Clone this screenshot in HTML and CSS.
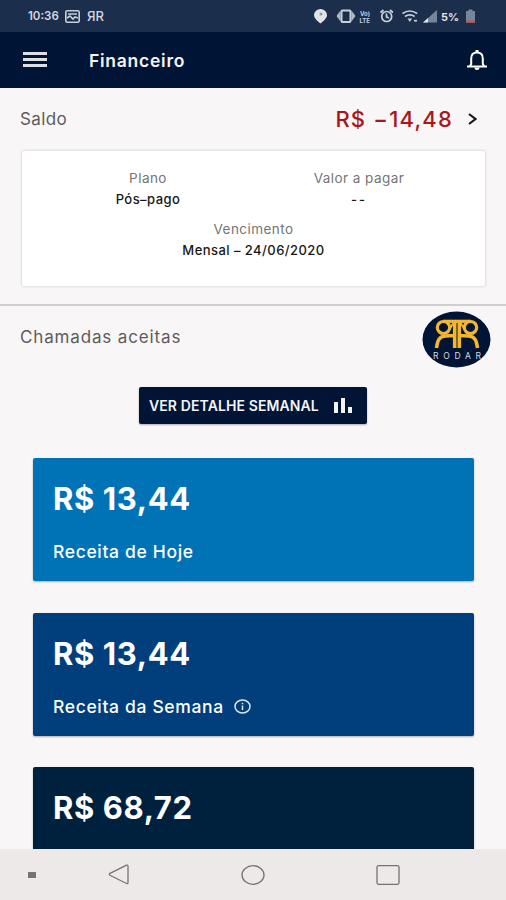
FILE: index.html
```html
<!DOCTYPE html>
<html lang="pt-BR">
<head>
  <meta charset="UTF-8" />
  <meta name="viewport" content="width=device-width, initial-scale=1.0"/>
  <title>Financeiro</title>
  <link rel="stylesheet" href="styles.css">
</head>
<body>
  <div class="status-bar">
    <span class="clock">10:36</span>
    <svg class="st-image" width="15" height="13" viewBox="0 0 15 13" fill="none" stroke="#c9d0dc" stroke-width="1.6">
      <rect x="0.8" y="0.8" width="13.4" height="11.4" rx="1.5"/>
      <path d="M3 4h9M2 8l3-2 3 3 2-2 3 1"/>
    </svg>
    <span class="st-brand"><span class="flip">R</span><span>R</span></span>
    <svg class="st-icons" width="164" height="18" viewBox="312 7 164 18" fill="none">
      <path d="M320.500 9a6.500 6.500 0 0 0-6.500 6.300c0 3.600 6.500 8.200 6.500 8.200s6.500-4.600 6.500-8.200A6.500 6.500 0 0 0 320.500 9z" fill="#e2e3e8"/>
      <circle cx="321" cy="14" r="1.500" fill="#8d99aa"/>
      <path d="M340.500 10.500v11l-4-5.500zM351.500 10.500v11l4-5.500z" fill="#aeb8c6"/>
      <rect x="341.500" y="10.500" width="9" height="11.500" rx="1" stroke="#c9d0dc" stroke-width="2"/>
      <text class="st-volte" x="360" y="15.500">Vo)</text>
      <text class="st-volte" x="359.500" y="22.500">LTE</text>
      <g stroke="#c9d0dc" stroke-width="1.700">
        <circle cx="386.700" cy="16.500" r="5"/>
        <path d="M386.500 13.500v3.500l2.500 1M380.500 12.500l3-2.500M393 12.500l-3-2.500"/>
      </g>
      <g stroke="#c9d0dc" stroke-width="1.700">
        <path d="M402.500 13.500q7.300-5 14.600 0M405 16.500q4.800-3.300 9.600 0"/>
        <path d="M407.500 18.500h4.600l-2.300 3.500z" fill="#c9d0dc" stroke="none"/>
        <path d="M414 20.700h3"/>
      </g>
      <path d="M423 22.500l14-12.500v12.500z" fill="#77859a"/>
      <path d="M423 22.500l5-4.500v4.500z" fill="#e2e3e8"/>
      <text class="st-battery" x="441" y="20.500" textLength="18" lengthAdjust="spacingAndGlyphs">5%</text>
      <path d="M466 11h2.500V9.500h4V11h2.500v11.500h-9z" fill="#77859a"/>
      <path d="M466 20.500h9v2.300h-9z" fill="#b65b54"/>
    </svg>
  </div>

  <header class="app-bar">
    <svg class="menu" width="24" height="16" viewBox="0 0 24 16" fill="#dedfe2">
      <path d="M0 0h24v3H0zM0 6h24v3H0zM0 12h24v3H0z"/>
    </svg>
    <h1>Financeiro</h1>
    <svg class="bell" width="22" height="22" viewBox="0 0 22 22" fill="none" stroke="#fff" stroke-width="2">
      <path d="M1 17.500h20M4 17l1.200-2V9.500C5.200 5.500 7.500 3.500 11 3.500s5.800 2 5.800 6V15l1.200 2"/>
      <path d="M9.500 1h3v3h-3zM8.500 18.500a2.500 2.500 0 0 0 5 0z" fill="#fff" stroke="none"/>
    </svg>
  </header>

  <main>
    <section class="balance">
      <div class="balance-head">
        <h2>Saldo</h2>
        <span class="amount">R$ −14,48</span>
        <svg class="chevron" width="9" height="12" viewBox="0 0 9 12" fill="none" stroke="#161616" stroke-width="2.2">
          <path d="M1 1l6.500 5L1 11"/>
        </svg>
      </div>
      <div class="plan-card">
        <dl class="plan">
          <dt>Plano</dt>
          <dd>Pós–pago</dd>
        </dl>
        <dl class="due-value">
          <dt>Valor a pagar</dt>
          <dd class="empty">--</dd>
        </dl>
        <dl class="due-date">
          <dt>Vencimento</dt>
          <dd>Mensal – 24/06/2020</dd>
        </dl>
      </div>
    </section>

    <section class="calls">
      <div class="calls-head">
        <h2>Chamadas aceitas</h2>
        <svg class="logo" width="69" height="57" viewBox="0 0 69 57">
          <ellipse cx="34.500" cy="28.500" rx="34" ry="28" fill="#001535"/>
          <g fill="none" stroke="#f3b72f" stroke-width="3.200">
            <path d="M21 10.300h28"/>
            <ellipse cx="21.500" cy="16.500" rx="6.200" ry="6"/>
            <ellipse cx="48.500" cy="16.500" rx="6.200" ry="6"/>
            <path d="M32.700 9v28M37.300 9v28" stroke-width="3.600"/>
            <path d="M14.500 37c1-7 2-11.500 9-12l10-0.500M55.500 37c-1-7-2-11.500-9-12l-10-0.500" stroke-width="3.600"/>
            <path d="M27 19l5-8M43 19l-5-8" stroke-width="2"/>
          </g>
          <text class="logo-text" x="11" y="47.500" textLength="48">RODAR</text>
        </svg>
      </div>

      <button class="detail-btn">
        <span>VER DETALHE SEMANAL</span>
        <svg width="18" height="15" viewBox="0 0 18 15" fill="#f4f4f7">
          <path d="M0 4h4v11H0zM7 0h4v15H7zM14 9h4v6h-4z"/>
        </svg>
      </button>

      <div class="revenue today">
        <strong>R$ 13,44</strong>
        <p>Receita de Hoje</p>
      </div>
      <div class="revenue week">
        <strong>R$ 13,44</strong>
        <p>Receita da Semana
          <svg width="17" height="15" viewBox="0 0 17 15" fill="none" stroke="#dce5f2" stroke-width="1.500">
            <ellipse cx="8.500" cy="7.500" rx="7.500" ry="6.500"/>
            <path d="M8.500 6.500v4.500M8.500 3.700v1.600"/>
          </svg>
        </p>
      </div>
      <div class="revenue month">
        <strong>R$ 68,72</strong>
      </div>
    </section>
  </main>

  <nav class="nav-bar">
    <span class="nav-dot"></span>
    <svg class="nav-back" width="22" height="21" viewBox="0 0 22 21" fill="none" stroke="#777374" stroke-width="1.300">
      <path d="M18.500 1.200L2 9.300q-1.500 1 0 2l16.500 8.200q1.500.5 1.500-1V2.200q0-1.500-1.500-1z"/>
    </svg>
    <svg class="nav-home" width="24" height="20" viewBox="0 0 24 20" fill="none" stroke="#777374" stroke-width="1.300">
      <ellipse cx="12" cy="10" rx="11" ry="9.300"/>
    </svg>
    <svg class="nav-recent" width="24" height="20" viewBox="0 0 24 20" fill="none" stroke="#777374" stroke-width="1.300">
      <rect x="1" y="0.700" width="22" height="18.600" rx="1.500"/>
    </svg>
  </nav>
</body>
</html>
```
FILE: styles.css
```css
* {
  margin: 0;
  padding: 0;
  box-sizing: border-box;
}

body {
  font-family: Inter, 'Open Sans', sans-serif;
  background: #f8f6f7;
  height: 900px;
  display: flex;
  flex-direction: column;
  overflow: hidden;
}

h1, h2 {
  font-weight: normal;
}

svg {
  display: block;
  flex: none;
}

.status-bar {
  height: 32px;
  flex: none;
  background: #1b2e4b;
  display: flex;
  align-items: center;
  padding: 0 30px 0 28px;
  color: #d3d8e1;
}

.clock {
  width: 37px;
  font-size: 11.5px;
  font-weight: 600;
}

.st-brand {
  display: flex;
  margin-left: 7px;
  font-size: 13px;
  font-weight: 500;
  line-height: 14px;
}

.st-brand .flip {
  transform: scaleX(-1);
}

.st-icons {
  margin-left: auto;
}

.st-volte {
  font-size: 6px;
  font-weight: 700;
  fill: #c9d0dc;
}

.st-battery {
  font-size: 10.5px;
  font-weight: 700;
  fill: #e2e3e8;
}

.app-bar {
  height: 56px;
  flex: none;
  background: #001535;
  display: flex;
  align-items: center;
  padding: 0 18px 0 23px;
  color: #f4f4f7;
}

.menu {
  margin-bottom: 1px;
}

.app-bar h1 {
  margin-left: 42px;
  font-size: 17.5px;
  font-weight: 600;
  letter-spacing: 0.75px;
}

.bell {
  margin-left: auto;
}

main {
  flex: 1;
  min-height: 0;
  overflow: hidden;
}

.balance {
  height: 218px;
  padding: 0 21px 0 22px;
  border-bottom: 2px solid #d0ced0;
}

.balance-head {
  height: 63px;
  display: flex;
  align-items: center;
  padding: 0 8px 2px 0;
}

h2 {
  margin-left: -2px;
  font-size: 17px;
  letter-spacing: 0.4px;
  color: #5d5b5c;
}

.amount {
  margin-left: auto;
  font-size: 22px;
  font-weight: 500;
  letter-spacing: 1.2px;
  color: #ac1418;
}

.chevron {
  margin-left: 15px;
}

.plan-card {
  height: 135px;
  display: grid;
  grid-template-columns: 252px 1fr;
  grid-template-rows: 51px 1fr;
  padding-top: 18px;
  background: #fff;
  border-radius: 2px;
  box-shadow: 0 0 3px rgba(0, 0, 0, 0.22);
  text-align: center;
}

.plan-card dt {
  font-size: 13.5px;
  line-height: 19px;
  letter-spacing: 0.45px;
  color: #767475;
}

.plan-card dd {
  font-size: 13px;
  line-height: 23px;
  font-weight: 500;
  letter-spacing: 0.45px;
  color: #171717;
}

.plan-card .empty {
  letter-spacing: 2px;
}

.due-value {
  margin-right: 41px;
}

.due-date {
  grid-column: 1 / 3;
}

.calls {
  padding: 0 32px 0 33px;
}

.calls-head {
  height: 68px;
  display: flex;
  align-items: center;
  justify-content: space-between;
  padding-bottom: 1px;
  margin: 0 -17px 0 -11px;
}

.calls-head h2 {
  padding-bottom: 6px;
  letter-spacing: 0.85px;
}

.logo-text {
  font-size: 8.5px;
  fill: #d6dbe4;
}

.detail-btn {
  width: 228px;
  height: 37px;
  margin: 13px 0 34px 106px;
  display: flex;
  align-items: center;
  justify-content: space-between;
  padding: 0 15px 0 10px;
  border: none;
  border-radius: 2px;
  background: #001535;
  color: #f4f4f7;
  font-family: inherit;
  font-size: 14px;
  font-weight: 600;
  letter-spacing: 0.1px;
  white-space: nowrap;
  box-shadow: 0 1px 2px rgba(0, 0, 0, 0.3);
}

.revenue {
  height: 123px;
  margin-bottom: 31.5px;
  padding: 22px 20px 0;
  border-radius: 2px;
  color: #fff;
  box-shadow: 0 1px 2px rgba(0, 0, 0, 0.3);
}

.revenue strong {
  display: block;
  font-size: 31px;
  line-height: 38px;
  font-weight: 700;
  letter-spacing: 0.6px;
}

.revenue p {
  display: flex;
  align-items: center;
  gap: 10px;
  margin-top: 23px;
  font-size: 17.5px;
  line-height: 22px;
  font-weight: 500;
  letter-spacing: 0.65px;
}

.today {
  background: #0072b6;
}

.week {
  background: #003e7c;
}

.month {
  background: #00213e;
}

.nav-bar {
  height: 51px;
  flex: none;
  background: #eee9e9;
  display: flex;
  align-items: center;
}

.nav-dot {
  width: 8px;
  height: 6px;
  margin-left: 28px;
  background: #777374;
}

.nav-back {
  margin-left: 72px;
}

.nav-home {
  margin-left: 111px;
}

.nav-recent {
  margin-left: 111px;
}
```
